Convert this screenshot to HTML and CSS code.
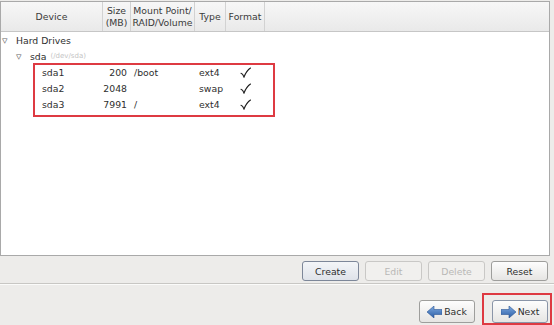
FILE: index.html
```html
<!DOCTYPE html>
<html lang="en">
<head>
    <meta charset="UTF-8">
    <title>Partition Layout</title>
    <link rel="stylesheet" href="styles.css">
</head>
<body>
    <div class="tree">
        <div class="tree-header">
            <div class="col col-device">Device</div>
            <div class="col col-size">Size<br>(MB)</div>
            <div class="col col-mount">Mount Point/<br>RAID/Volume</div>
            <div class="col col-type">Type</div>
            <div class="col col-format">Format</div>
            <div class="col col-fill"></div>
        </div>

        <div class="row group">
            <span class="expander">&#9663;</span>Hard Drives
        </div>
        <div class="row disk">
            <span class="expander">&#9663;</span>sda <span class="dev-path">(/dev/sda)</span>
        </div>

        <div class="row part">
            <div class="cell col-device">sda1</div>
            <div class="cell col-size">200</div>
            <div class="cell col-mount">/boot</div>
            <div class="cell col-type">ext4</div>
            <div class="cell col-format"><svg class="check" viewBox="0 0 11 11"><path d="M1 6.2 Q2.8 6.6 4 10 Q6.5 3.5 10.5 1"/></svg></div>
        </div>
        <div class="row part">
            <div class="cell col-device">sda2</div>
            <div class="cell col-size">2048</div>
            <div class="cell col-mount"></div>
            <div class="cell col-type">swap</div>
            <div class="cell col-format"><svg class="check" viewBox="0 0 11 11"><path d="M1 6.2 Q2.8 6.6 4 10 Q6.5 3.5 10.5 1"/></svg></div>
        </div>
        <div class="row part">
            <div class="cell col-device">sda3</div>
            <div class="cell col-size">7991</div>
            <div class="cell col-mount">/</div>
            <div class="cell col-type">ext4</div>
            <div class="cell col-format"><svg class="check" viewBox="0 0 11 11"><path d="M1 6.2 Q2.8 6.6 4 10 Q6.5 3.5 10.5 1"/></svg></div>
        </div>

        <!-- annotation box over the partitions -->
        <div class="mark-partitions"></div>
    </div>

    <div class="actions">
        <button class="btn btn-create">Create</button>
        <button class="btn btn-edit" disabled>Edit</button>
        <button class="btn btn-delete" disabled>Delete</button>
        <button class="btn btn-reset">Reset</button>
    </div>

    <div class="separator"></div>

    <div class="nav">
        <button class="btn btn-nav btn-back">
            <svg width="15" height="12" viewBox="0 0 15 12">
                <defs>
                    <linearGradient id="arrowBack" x1="0" y1="0" x2="0" y2="1">
                        <stop offset="0" stop-color="#7eaae0"/>
                        <stop offset="1" stop-color="#2b5da6"/>
                    </linearGradient>
                </defs>
                <polygon points="15,3.5 7,3.5 7,0 0,6 7,12 7,8.5 15,8.5" fill="url(#arrowBack)" stroke="#2a5494" stroke-width="0.6"/>
            </svg>
            Back
        </button>
        <span class="mark-next">
            <button class="btn btn-nav btn-next">
                <svg width="15" height="12" viewBox="0 0 15 12">
                    <defs>
                        <linearGradient id="arrowNext" x1="0" y1="0" x2="0" y2="1">
                            <stop offset="0" stop-color="#7eaae0"/>
                            <stop offset="1" stop-color="#2b5da6"/>
                        </linearGradient>
                    </defs>
                    <polygon points="0,3.5 8,3.5 8,0 15,6 8,12 8,8.5 0,8.5" fill="url(#arrowNext)" stroke="#2a5494" stroke-width="0.6"/>
                </svg>
                Next
            </button>
        </span>
    </div>
</body>
</html>
```

FILE: styles.css
```css
body {
    margin: 0;
    width: 554px;
    height: 325px;
    overflow: hidden;
    background: #edecea;
    font-family: "DejaVu Sans", sans-serif;
    font-size: 9.3px;
    color: #2e2e2e;
}

.tree {
    position: relative;
    margin-top: 1px;
    width: 548px;
    height: 253px;
    background: #fff;
    border: 1px solid #a9a9a9;
}

.tree-header {
    display: flex;
    height: 29px;
    background: linear-gradient(#f7f7f7, #e9e9e9);
    border-bottom: 1px solid #c6c6c6;
    color: #3a3a3a;
}

.tree-header .col {
    display: flex;
    align-items: center;
    justify-content: center;
    text-align: center;
    line-height: 12px;
    border-right: 1px solid #d2d2d2;
    box-sizing: border-box;
}

.tree-header .col-fill {
    flex: 1;
    border-right: none;
}

.col-device { width: 102px; }
.col-size { width: 28px; }
.col-mount { width: 64px; }
.col-type { width: 31px; }
.col-format { width: 39px; }

.row {
    display: flex;
    align-items: center;
    height: 16px;
    white-space: nowrap;
}

.expander {
    display: inline-block;
    width: 10px;
    margin-right: 4px;
    font-size: 11px;
    color: #666;
}

.group {
    padding-left: 1px;
}

.disk {
    padding-left: 15px;
}

.dev-path {
    margin-left: 4px;
    font-size: 7px;
    color: #c4c4c4;
}

.part .cell {
    box-sizing: border-box;
}

.part .col-device {
    padding-left: 41px;
}

.part .col-size {
    text-align: right;
    padding-right: 4px;
    width: 31px;
    margin-left: -3px;
}

.part .col-mount {
    padding-left: 3px;
}

.part .col-type {
    padding-left: 4px;
}

.part .col-format {
    display: flex;
    justify-content: center;
}

.check {
    width: 11px;
    height: 11px;
    fill: none;
    stroke: #1a1a1a;
    stroke-width: 1.1;
    stroke-linecap: round;
}

.mark-partitions {
    position: absolute;
    left: 32px;
    top: 61px;
    width: 242px;
    height: 54px;
    box-sizing: border-box;
    border: 2px solid #de3a42;
}

.actions {
    display: flex;
    justify-content: flex-end;
    gap: 6px;
    padding: 5px 6px 0 0;
}

.btn {
    height: 20px;
    padding: 0;
    font-family: "DejaVu Sans", sans-serif;
    font-size: 9.3px;
    color: #2e2e2e;
    background: linear-gradient(#fdfdfd, #e6e5e3);
    border: 1px solid #9e9e9c;
    border-radius: 3px;
}

.btn-create {
    width: 57px;
    background: linear-gradient(#f3f5f8, #dfe3ea);
    border-color: #7d8799;
}

.btn-edit,
.btn-delete {
    width: 57px;
    color: #b9b8b6;
    background: #f1f0ee;
    border-color: #c9c8c6;
}

.btn-reset {
    width: 57px;
}

.separator {
    margin-top: 2px;
    border-top: 1px solid #c8c7c4;
    border-bottom: 1px solid #fbfbfa;
}

.nav {
    display: flex;
    justify-content: flex-end;
    align-items: flex-start;
    gap: 7px;
    margin-top: 8px;
    padding-right: 2px;
}

.btn-nav {
    display: flex;
    align-items: center;
    justify-content: center;
    gap: 2px;
    width: 56px;
    height: 23px;
    margin-top: 7px;
}

.btn-next {
    border-color: #8a95a8;
    margin-top: 5px;
}

.mark-next {
    display: flex;
    width: 70px;
    height: 32px;
    box-sizing: border-box;
    padding-left: 8px;
    border: 2px solid #de3a42;
}
```
